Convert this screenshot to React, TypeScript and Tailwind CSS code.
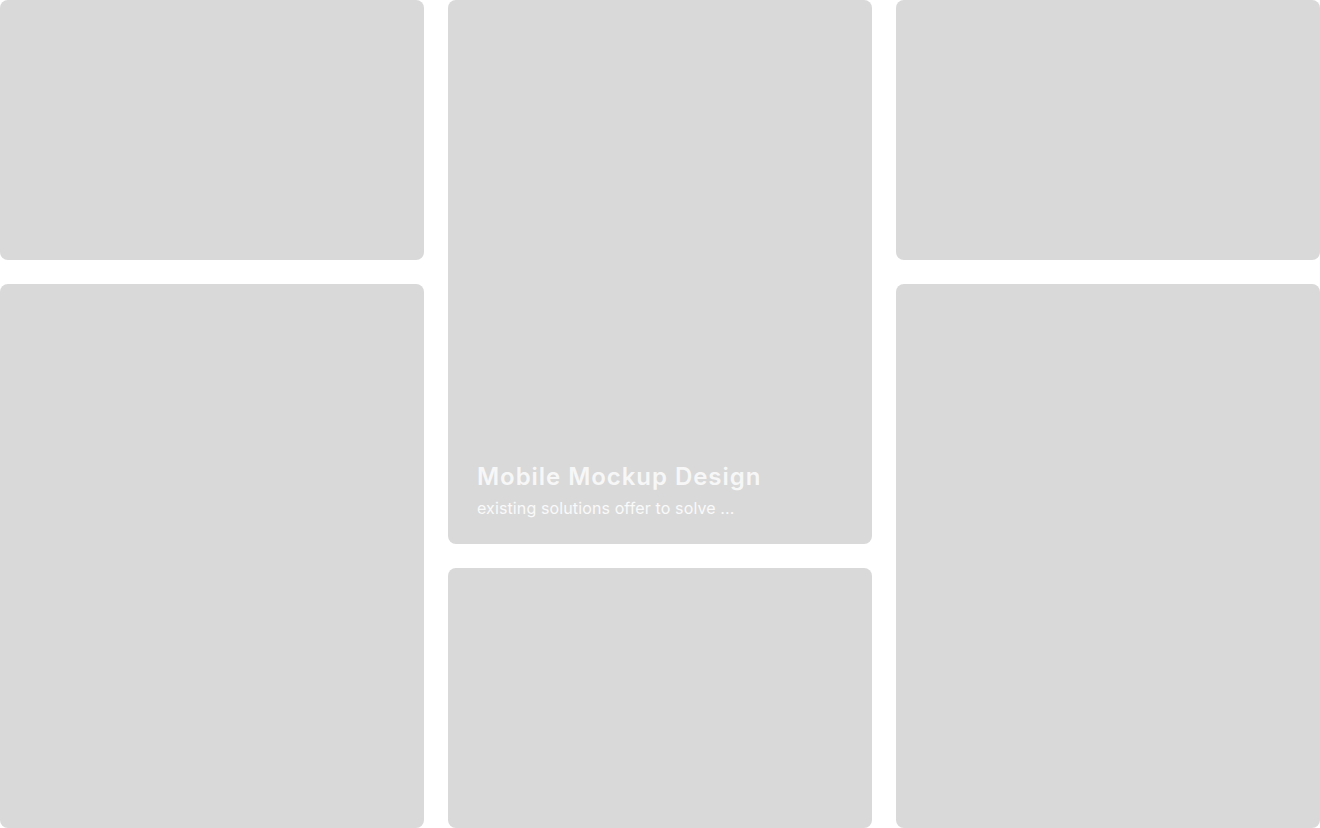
const Card = ({ h, children }: { h: string; children?: React.ReactNode }) => (
  <div className={`${h} flex flex-col justify-end rounded-lg bg-[#d9d9d9] px-[29px] pb-[24px]`}>{children}</div>
);

export default function App() {
  return (
    <div className="grid h-[828px] w-[1320px] grid-cols-3 gap-6 overflow-hidden bg-white">
      <div className="flex flex-col gap-6">
        <Card h="h-[260px]" />
        <Card h="h-[544px]" />
      </div>
      <div className="flex flex-col gap-6">
        <Card h="h-[544px]">
          <h3 className="font-['Inter',sans-serif] text-[24px] font-semibold leading-[30px] tracking-[0.95px] text-[#f7f7f7]">
            Mobile Mockup Design
          </h3>
          <p className="mt-[4px] font-['Inter',sans-serif] text-[16px] leading-[24px] tracking-[0.12px] text-[#fafafa]">
            existing solutions offer to solve ...
          </p>
        </Card>
        <Card h="h-[260px]" />
      </div>
      <div className="flex flex-col gap-6">
        <Card h="h-[260px]" />
        <Card h="h-[544px]" />
      </div>
    </div>
  );
}
